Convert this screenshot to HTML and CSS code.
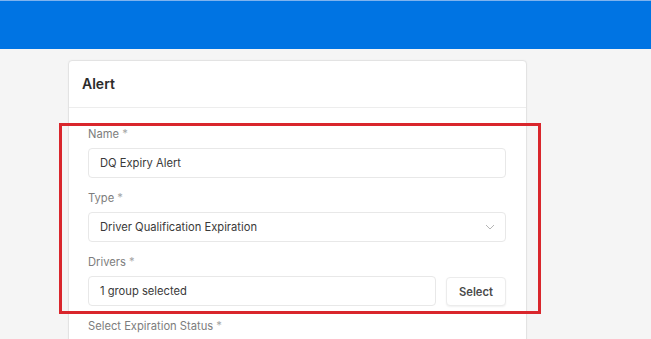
FILE: index.html
```html
<!DOCTYPE html>
<html lang="en">
<head>
  <meta charset="UTF-8" />
  <title>Alert</title>
  <link rel="stylesheet" href="styles.css">
</head>
<body>
  <header class="topbar"></header>

  <main class="page">
    <section class="card">
      <div class="card-head">Alert</div>
      <form class="card-body">
        <div class="field">
          <label class="field-label">Name <span class="req">*</span></label>
          <div class="input">DQ Expiry Alert</div>
        </div>
        <div class="field">
          <label class="field-label">Type <span class="req">*</span></label>
          <div class="input select">
            <span>Driver Qualification Expiration</span>
            <svg class="chevron" width="10" height="6" viewBox="0 0 10 6">
              <path d="M1 1l4 4 4-4" fill="none" stroke="#b5b5b5" stroke-width="1"/>
            </svg>
          </div>
        </div>
        <div class="field">
          <label class="field-label">Drivers <span class="req">*</span></label>
          <div class="input-row">
            <div class="input grow">1 group selected</div>
            <button type="button" class="btn">Select</button>
          </div>
        </div>
        <div class="field">
          <label class="field-label">Select Expiration Status <span class="req">*</span></label>
          <div class="input"></div>
        </div>
      </form>
      <!-- highlight box drawn over the form -->
      <div class="highlight"></div>
    </section>
  </main>
</body>
</html>
```

FILE: styles.css
```css
html, body {
  margin: 0;
  padding: 0;
  height: 100%;
  overflow: hidden;
  background: #f5f5f5;
  font-family: 'Inter', 'Noto Sans', sans-serif;
}

.topbar {
  height: 48px;
  background: #0074e3;
  border-top: 1px solid #7fb3ee;
}

.page {
  padding: 11px 0 0 68px;
}

.card {
  position: relative;
  width: 457px;
  background: #fff;
  border: 1px solid #e3e3e3;
  border-radius: 4px;
  box-shadow: 0 0 2px rgba(0,0,0,0.04);
}

.card-head {
  height: 46px;
  line-height: 46px;
  padding-left: 13px;
  font-size: 14px;
  font-weight: 600;
  color: #2b2b2b;
  border-bottom: 1px solid #ededed;
}

.card-body {
  display: flex;
  flex-direction: column;
  gap: 12px;
  padding: 18px 20px 40px 19px;
}

.field {
  display: flex;
  flex-direction: column;
  gap: 6px;
}

.field-label {
  height: 16px;
  line-height: 16px;
  font-size: 11.2px;
  color: #7d7d7d;
}

.req {
  color: #a5a5a5;
}

.input {
  box-sizing: border-box;
  height: 30px;
  line-height: 28px;
  padding: 0 11px;
  border: 1px solid #e8e8e8;
  border-radius: 4px;
  font-size: 11.2px;
  color: #3a3a3a;
  background: #fff;
}

.select {
  display: flex;
  justify-content: space-between;
  align-items: center;
  padding-right: 10px;
}

.chevron {
  display: block;
}

.input-row {
  display: flex;
  gap: 10px;
}

.grow {
  flex: 1;
}

.btn {
  width: 60px;
  height: 29px;
  margin-top: 1px;
  border: 1px solid #ececec;
  border-radius: 4px;
  background: #fff;
  box-shadow: 0 1px 2px rgba(0,0,0,0.06);
  font-family: inherit;
  font-size: 11.2px;
  font-weight: 600;
  color: #4a4a4a;
  padding: 0;
}

.highlight {
  position: absolute;
  left: -10px;
  top: 62px;
  width: 476px;
  height: 185px;
  border: 3px solid #d9262c;
  pointer-events: none;
}
```
